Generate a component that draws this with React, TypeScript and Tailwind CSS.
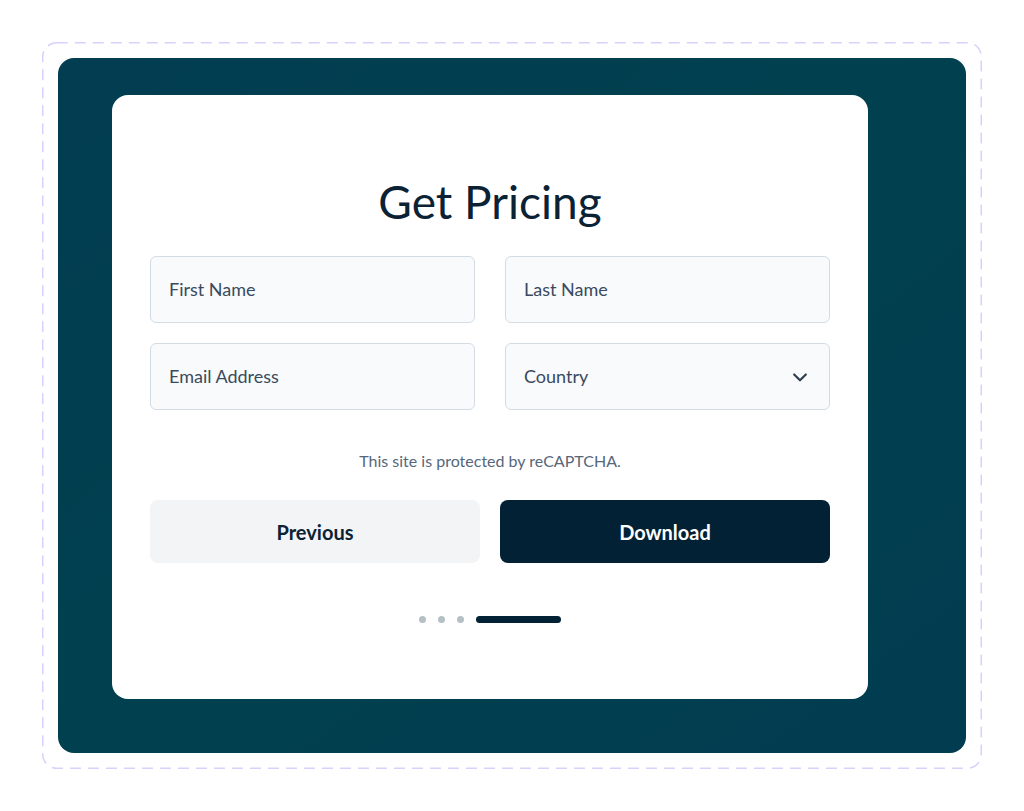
import React from 'react';

const font = { fontFamily: 'Lato, "Noto Sans", sans-serif' };

const Field: React.FC<{ label: string; select?: boolean }> = ({ label, select }) => (
  <div className="h-[67px] rounded-[6px] border border-[#d3dce4] bg-[#f8fafc] px-[18px] flex items-center justify-between">
    <span className="text-[18px] text-[#3a4a5c]">{label}</span>
    {select && (
      <svg width="20" height="20" viewBox="0 0 24 24" fill="none" stroke="#2f3e4f" strokeWidth="2.6" strokeLinecap="round" strokeLinejoin="round" className="mr-[1px]">
        <path d="M5 9l7 7 7-7" />
      </svg>
    )}
  </div>
);

const App: React.FC = () => {
  return (
    <div className="w-[1024px] h-[811px] bg-white p-[42px]" style={font}>
      <div className="relative w-[940px] h-[727px] p-[16px]">
        {/* dashed frame */}
        <svg className="absolute inset-0 pointer-events-none" width="940" height="727">
          <rect x="0.75" y="0.75" width="938.5" height="725.5" rx="14" fill="none" stroke="#d9d1fd" strokeWidth="1.5" strokeDasharray="11 7" />
        </svg>
        <div className="w-[908px] h-[695px] rounded-[16px] bg-gradient-to-br from-[#023d51] via-[#01414f] to-[#013c50] pt-[37px] pl-[54px]">
          <div className="w-[756px] h-[604px] rounded-[16px] bg-white px-[38px] pt-[79px] flex flex-col">
            <h1 className="text-center text-[46px] leading-[56px] text-[#0b2235] font-normal">Get Pricing</h1>
            <div className="mt-[26px] grid grid-cols-2 gap-x-[30px] gap-y-[20px]">
              <Field label="First Name" />
              <Field label="Last Name" />
              <Field label="Email Address" />
              <Field label="Country" select />
            </div>
            <p className="mt-[39px] text-center text-[16px] leading-[24px] text-[#56677a]">
              This site is protected by reCAPTCHA.
            </p>
            <div className="mt-[27px] grid grid-cols-2 gap-[20px]">
              <button className="h-[63px] rounded-[8px] bg-[#f3f4f6] text-[20px] font-bold text-[#0b2235]">Previous</button>
              <button className="h-[63px] rounded-[8px] bg-[#022135] text-[20px] font-bold text-white">Download</button>
            </div>
            <div className="mt-[53px] flex items-center justify-center gap-[12px]">
              <span className="w-[7px] h-[7px] rounded-full bg-[#b4bfc6]" />
              <span className="w-[7px] h-[7px] rounded-full bg-[#b4bfc6]" />
              <span className="w-[7px] h-[7px] rounded-full bg-[#b4bfc6]" />
              <span className="w-[85px] h-[7px] rounded-full bg-[#022135]" />
            </div>
          </div>
        </div>
      </div>
    </div>
  );
};

export default App;
